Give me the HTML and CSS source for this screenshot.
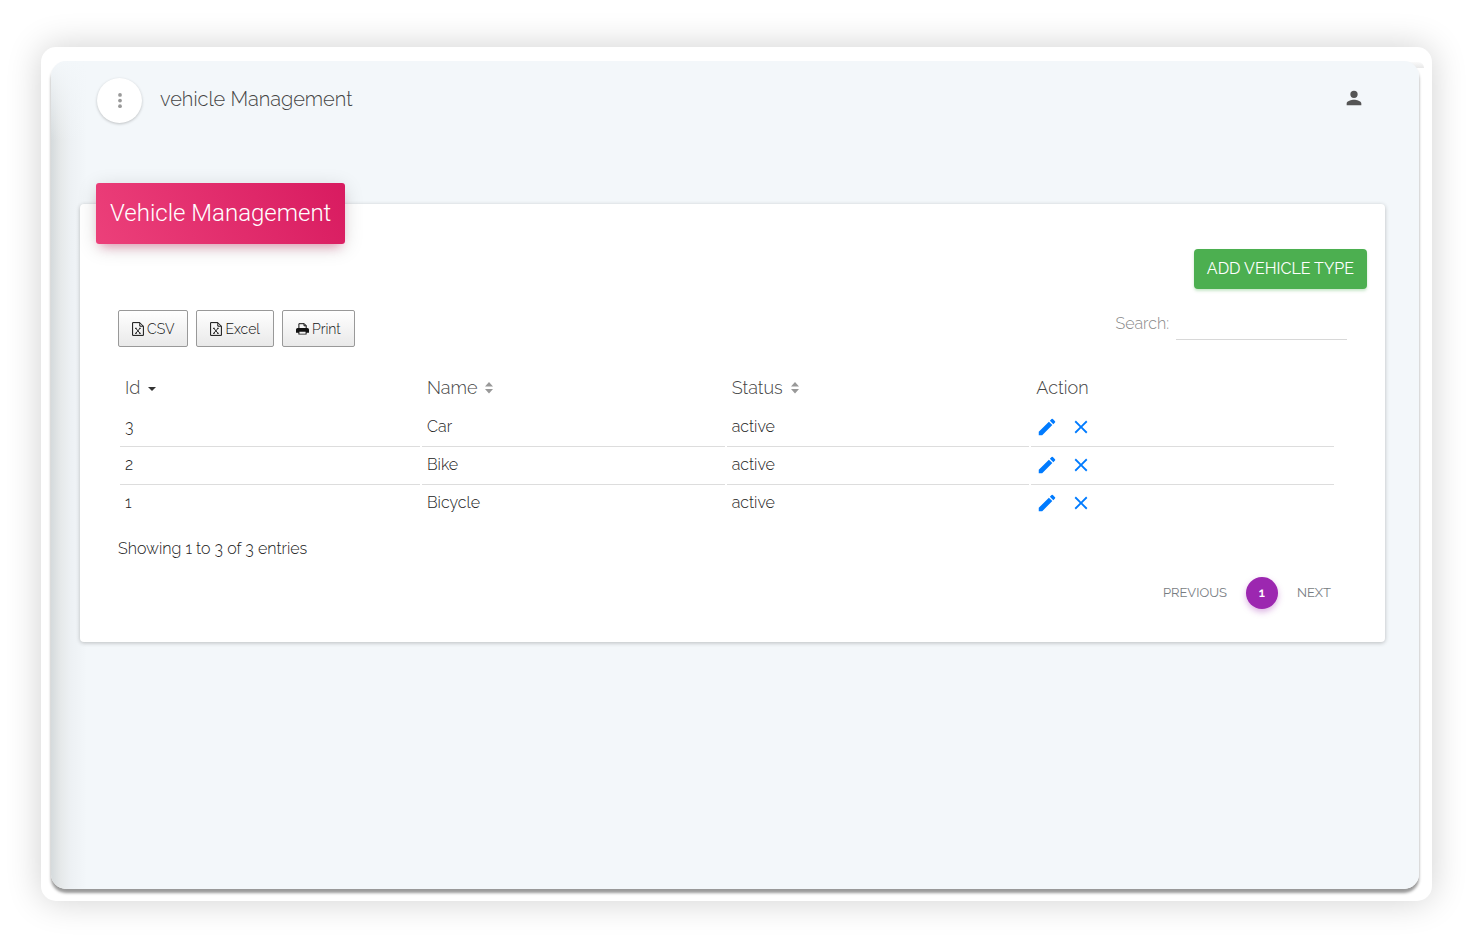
FILE: index.html
```html
<!DOCTYPE html>
<html lang="en">
<head>
<meta charset="utf-8">
<title>Vehicle Management</title>
<link rel="stylesheet" href="styles.css">
</head>
<body>
<svg class="sprite" aria-hidden="true">
  <symbol id="pencil" viewBox="0 0 24 24"><path d="M3 17.25V21h3.75L17.81 9.94l-3.75-3.75L3 17.25zM20.71 7.04a1 1 0 0 0 0-1.41l-2.34-2.34a1 1 0 0 0-1.41 0l-1.83 1.83 3.75 3.75 1.83-1.83z"/></symbol>
  <symbol id="cross" viewBox="0 0 24 24"><path d="M19 6.41 17.59 5 12 10.59 6.41 5 5 6.41 10.59 12 5 17.59 6.41 19 12 13.41 17.59 19 19 17.59 13.41 12z"/></symbol>
  <symbol id="sheet" viewBox="0 0 12 14"><path d="M.6.6h7.2l3.6 3.6v9.2H.6zM7.8.6v3.6h3.6" fill="none" stroke="currentColor"/><path d="M3.8 6.3l4.2 5M8 6.3l-4.2 5M3 6.3h1.8M7 6.3h1.8M3 11.3h1.8M7 11.3h1.8" fill="none" stroke="currentColor" stroke-width=".9"/></symbol>
  <symbol id="printer" viewBox="0 0 13 12"><path d="M2.9 6V.7h5.4l1.9 1.9V6M8 .7v2.1h2.2" fill="none" stroke="currentColor"/><path fill-rule="evenodd" d="M1.6 5h9.8A1.6 1.6 0 0 1 13 6.600V9.800H10.600V11.600H2.400V9.800H0V6.600A1.600 1.600 0 0 1 1.600 5zM3.400 8.800v1.900h6.200V8.800z"/></symbol>
  <symbol id="sort" viewBox="0 0 8 12"><path d="M4 0l4 4.600H0zM0 7h8l-4 4.600z"/></symbol>
  <symbol id="desc" viewBox="0 0 8 12"><path d="M0 5h8L4 9z"/></symbol>
</svg>
<div class="frame">
  <div class="window">
    <header class="topbar">
      <button class="menu" type="button" aria-label="Toggle menu"><svg viewBox="0 0 4 16"><circle cx="2" cy="2" r="2"/><circle cx="2" cy="8" r="2"/><circle cx="2" cy="14" r="2"/></svg></button>
      <a class="brand" href="#">vehicle Management</a>
      <a class="account" href="#" aria-label="Account"><svg viewBox="0 0 24 24"><path d="M12 12a4 4 0 1 0 0-8 4 4 0 0 0 0 8zm0 2c-2.670 0-8 1.340-8 4v2h16v-2c0-2.660-5.330-4-8-4z"/></svg></a>
    </header>
    <main class="card">
      <h1 class="card-title">Vehicle Management</h1>
      <div class="add-row"><button class="add" type="button">ADD VEHICLE TYPE</button></div>
      <div class="tools">
        <div class="exports">
          <button type="button"><svg class="i-sheet"><use href="#sheet"/></svg>CSV</button>
          <button type="button"><svg class="i-sheet"><use href="#sheet"/></svg>Excel</button>
          <button type="button"><svg class="i-print"><use href="#printer"/></svg>Print</button>
        </div>
        <label class="search" for="search">Search:<input id="search" type="search"></label>
      </div>
      <table class="list">
        <thead><tr>
          <th>Id<svg class="sort active"><use href="#desc"/></svg></th>
          <th>Name<svg class="sort"><use href="#sort"/></svg></th>
          <th>Status<svg class="sort"><use href="#sort"/></svg></th>
          <th>Action</th>
        </tr></thead>
        <tbody>
          <tr><td>3</td><td>Car</td><td>active</td><td><div class="actions"><a href="#" aria-label="Edit Car"><svg><use href="#pencil"/></svg></a><a href="#" aria-label="Delete Car"><svg><use href="#cross"/></svg></a></div></td></tr>
          <tr><td>2</td><td>Bike</td><td>active</td><td><div class="actions"><a href="#" aria-label="Edit Bike"><svg><use href="#pencil"/></svg></a><a href="#" aria-label="Delete Bike"><svg><use href="#cross"/></svg></a></div></td></tr>
          <tr><td>1</td><td>Bicycle</td><td>active</td><td><div class="actions"><a href="#" aria-label="Edit Bicycle"><svg><use href="#pencil"/></svg></a><a href="#" aria-label="Delete Bicycle"><svg><use href="#cross"/></svg></a></div></td></tr>
        </tbody>
      </table>
      <p class="info">Showing 1 to 3 of 3 entries</p>
      <nav class="pager" aria-label="Pages"><a href="#">PREVIOUS</a><a class="current" href="#" aria-current="page">1</a><a href="#">NEXT</a></nav>
    </main>
  </div>
</div>
</body>
</html>
```
FILE: styles.css
```css
* { box-sizing: border-box; }
body {
  margin: 0;
  min-height: 100vh;
  display: flex;
  padding: 47px 49px 49px 41px;
  background: #fff;
  color: #222;
  font-family: Raleway, Lato, sans-serif;
  font-size: 16px;
  font-weight: 300;
  line-height: 24px;
}
a { color: inherit; text-decoration: none; }
svg { display: block; fill: currentColor; flex: none; }
button, input { font: inherit; color: inherit; }
button { cursor: pointer; }
.sprite { position: absolute; width: 0; height: 0; }
.frame {
  position: relative;
  z-index: 0;
  flex: 1;
  display: flex;
  padding: 14px 13px 12px 10px;
  border-radius: 15px;
  background: #fff;
  box-shadow: 0 0 35px rgba(0, 0, 0, .19);
}
/* Edge of the layer behind the window, visible at its top right corner */
.frame::before {
  content: "";
  position: absolute;
  z-index: -1;
  top: 15px;
  right: 8px;
  width: 40px;
  height: 6px;
  border-radius: 0 20px 0 0;
  background: linear-gradient(#fafafa, #e8e8e8);
}
.window {
  flex: 1;
  min-width: 0;
  padding: 17px 34px 30px 29px;
  border-radius: 15px;
  background:
    linear-gradient(#f3f7fa 0, rgba(243, 247, 250, 0) 80px),
    linear-gradient(90deg, #d5dadc 0, #e6e9ea 10px, #edf1f4 20px, #f3f7fa 36px);
  box-shadow: 0 4px 3px rgba(0, 0, 0, .4);
}
.topbar {
  display: flex;
  align-items: flex-start;
  padding: 0 20px 0 17px;
  color: #444;
}
.menu {
  display: grid;
  place-items: center;
  width: 45px;
  height: 45px;
  padding: 0;
  border: 0;
  border-radius: 50%;
  background: #fff;
  color: #999;
  box-shadow: 0 1px 3px rgba(0, 0, 0, .22);
}
.menu svg { width: 4px; height: 15px; }
.brand { margin: 9px auto 0 18px; font-size: 20px; }
.account { margin-top: 9px; color: #555; }
.account svg { width: 22px; height: 22px; }
.card {
  display: flow-root;
  margin-top: 81px;
  padding: 0 18px 33px 16px;
  border-radius: 4px;
  background: #fff;
  box-shadow: 0 1px 4px rgba(0, 0, 0, .24);
}
.card-title {
  position: relative;
  width: fit-content;
  margin: -21px 0 0;
  padding: 15px 14px;
  border-radius: 3px;
  background: linear-gradient(60deg, #ec407a, #d81b60);
  color: #fff;
  font: 300 24px/31px Roboto, sans-serif;
  box-shadow: 0 4px 20px rgba(0, 0, 0, .14), 0 7px 10px -5px rgba(233, 30, 99, .4);
}
.add-row { display: flex; justify-content: flex-end; margin-top: 5px; }
.add {
  height: 40px;
  padding: 0 13px;
  border: 0;
  border-radius: 4px;
  background: #4caf50;
  color: #fff;
  font-weight: 400;
  box-shadow: 0 2px 3px rgba(76, 175, 80, .3);
}
.tools {
  display: flex;
  justify-content: space-between;
  margin: 21px 20px 0 22px;
}
.exports { display: flex; gap: 8px; }
.exports button {
  display: flex;
  align-items: center;
  gap: 3px;
  height: 37px;
  padding: 0 13px;
  border: 1px solid #999;
  border-radius: 2px;
  background: linear-gradient(#fff, #e9e9e9);
  color: #111;
  font-size: 14px;
}
.i-sheet { width: 12px; height: 14px; }
.i-print { width: 13px; height: 12px; }
.search { display: flex; gap: 7px; height: 30px; color: #888; line-height: 28px; }
.search input {
  width: 171px;
  border: 0;
  border-bottom: 1px solid #d8d8d8;
  border-radius: 0;
  outline: 0;
  background: none;
}
.list {
  width: calc(100% - 53px);
  margin: 20px 0 0 22px;
  table-layout: fixed;
  border-collapse: separate;
  border-spacing: 2px;
}
.list th, .list td { padding: 5px; text-align: left; vertical-align: top; }
.list th { height: 40px; color: #444; font-size: 18px; font-weight: 300; line-height: 28px; }
.list th:first-child { width: 300px; }
.list td { height: 36px; line-height: 22px; }
.list tr:not(:last-child) td { border-bottom: 1px solid #ddd; }
.sort { display: inline-block; width: 8px; height: 12px; margin-left: 8px; color: #999; }
.sort.active { color: #333; }
.actions { display: flex; gap: 12px; color: #007bff; }
.actions svg { width: 22px; height: 22px; }
.info { margin: 12px 22px 0; }
.pager {
  display: flex;
  align-items: center;
  justify-content: flex-end;
  gap: 19px;
  margin: 16px 36px 0 0;
  color: #777c82;
  font-size: 13px;
  font-weight: 400;
}
.pager .current {
  width: 32px;
  border-radius: 50%;
  background: #9c27b0;
  color: #fff;
  font-weight: 600;
  line-height: 32px;
  text-align: center;
  box-shadow: 0 3px 6px rgba(156, 39, 176, .35);
}
```
